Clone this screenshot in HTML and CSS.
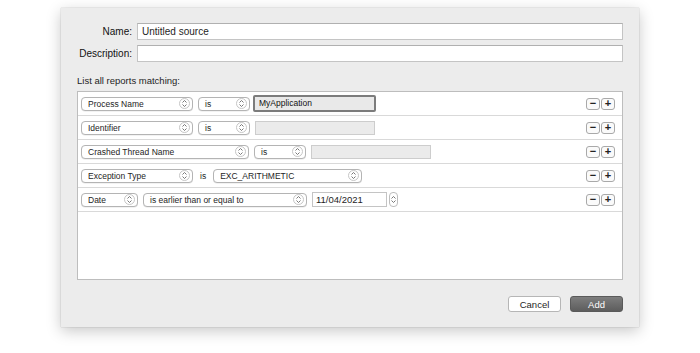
FILE: index.html
```html
<!DOCTYPE html>
<html lang="en">
<head>
    <meta charset="UTF-8">
    <meta name="viewport" content="width=device-width, initial-scale=1.0">
    <title>New Source</title>
    <link rel="stylesheet" href="styles.css">
</head>
<body>
    <div class="sheet">
        <div class="fields">
            <label class="field-label" for="name">Name:</label>
            <div class="text-input" id="name">Untitled source</div>
            <label class="field-label" for="desc">Description:</label>
            <div class="text-input" id="desc"></div>
        </div>

        <p class="caption">List all reports matching:</p>

        <div class="rules">
            <div class="rule">
                <div class="popup w-112">Process Name <span class="arrows"></span></div>
                <div class="popup w-52">is <span class="arrows"></span></div>
                <div class="value focused">MyApplication</div>
                <div class="add-remove"><span class="sq">&minus;</span><span class="sq">+</span></div>
            </div>
            <div class="rule">
                <div class="popup w-112">Identifier <span class="arrows"></span></div>
                <div class="popup w-52">is <span class="arrows"></span></div>
                <div class="value"></div>
                <div class="add-remove"><span class="sq">&minus;</span><span class="sq">+</span></div>
            </div>
            <div class="rule">
                <div class="popup w-168">Crashed Thread Name <span class="arrows"></span></div>
                <div class="popup w-52">is <span class="arrows"></span></div>
                <div class="value"></div>
                <div class="add-remove"><span class="sq">&minus;</span><span class="sq">+</span></div>
            </div>
            <div class="rule">
                <div class="popup w-112">Exception Type <span class="arrows"></span></div>
                <span class="plain">is</span>
                <div class="popup w-149">EXC_ARITHMETIC <span class="arrows"></span></div>
                <div class="add-remove"><span class="sq">&minus;</span><span class="sq">+</span></div>
            </div>
            <div class="rule">
                <div class="popup w-57">Date <span class="arrows"></span></div>
                <div class="popup w-164">is earlier than or equal to <span class="arrows"></span></div>
                <div class="date">11/04/2021</div>
                <div class="stepper"></div>
                <div class="add-remove"><span class="sq">&minus;</span><span class="sq">+</span></div>
            </div>
        </div>

        <div class="actions">
            <button class="btn">Cancel</button>
            <button class="btn primary">Add</button>
        </div>
    </div>

    <script>
        // same up/down chevron icon for every popup and the stepper
        const chevrons = '<svg width="7" height="9" viewBox="0 0 7 9"><path d="M1.5 3.5 L3.5 1.5 L5.5 3.5 M1.5 5.5 L3.5 7.5 L5.5 5.5" fill="none" stroke="#6a6a6a" stroke-width="0.9"/></svg>';
        document.querySelectorAll('.arrows, .stepper').forEach(function (el) {
            el.innerHTML = chevrons;
        });
    </script>
</body>
</html>
```

FILE: styles.css
```css
body {
    margin: 0;
    width: 700px;
    height: 353px;
    background-color: #fff;
    font-family: 'Liberation Sans', Arial, sans-serif;
    color: #1e1e1e;
    overflow: hidden;
}
.sheet {
    margin: 8px 0 0 61px;
    width: 578px;
    height: 319px;
    box-sizing: border-box;
    padding: 15px 16px 0 16px;
    background-color: #ececec;
    box-shadow: 0 4px 14px rgba(0,0,0,0.22), 0 0 1px rgba(0,0,0,0.3);
}
.fields {
    display: grid;
    grid-template-columns: 55px 1fr;
    column-gap: 5px;
    row-gap: 5px;
}
.field-label {
    font-size: 10px;
    text-align: right;
    line-height: 17px;
    white-space: nowrap;
    color: #111;
}
.text-input {
    height: 17px;
    box-sizing: border-box;
    background-color: #fff;
    border: 1px solid #c4c4c4;
    border-top-color: #b0b0b0;
    font-size: 10px;
    line-height: 15px;
    padding-left: 4px;
}
.caption {
    margin: 12px 0 0 0;
    font-size: 9.5px;
    line-height: 13px;
}
.rules {
    margin-top: 4px;
    height: 189px;
    box-sizing: border-box;
    background-color: #fff;
    border: 1px solid #bdbdbd;
}
.rule {
    display: flex;
    align-items: center;
    gap: 5px;
    height: 24px;
    box-sizing: border-box;
    padding: 0 7px 0 3px;
    border-bottom: 1px solid #d9d9d9;
    font-size: 8.5px;
}
.popup {
    display: flex;
    align-items: center;
    justify-content: space-between;
    height: 14px;
    box-sizing: border-box;
    padding: 0 2px 0 6px;
    background-color: #fff;
    border: 1px solid #b4b4b4;
    border-radius: 4px;
    box-shadow: 0 0.5px 0 rgba(0,0,0,0.1);
}
.arrows {
    display: flex;
    align-items: center;
    justify-content: center;
    width: 9px;
    height: 9px;
    border: 0.5px solid #c6c6c6;
    border-radius: 50%;
}
.w-52 { width: 52px; }
.w-57 { width: 57px; }
.w-112 { width: 112px; }
.w-149 { width: 149px; }
.w-164 { width: 164px; }
.w-168 { width: 168px; }
.value {
    width: 120px;
    height: 14px;
    box-sizing: border-box;
    background-color: #ebebeb;
    border: 1px solid #cdcdcd;
    padding-left: 4px;
    line-height: 12px;
}
.value.focused {
    width: 123px;
    height: 17px;
    margin-left: -2px;
    border: 2px solid #7c7c7c;
    border-radius: 2px;
    line-height: 13px;
    background-color: #e9e9e9;
    color: #111;
}
.plain {
    padding: 0 2px;
}
.date {
    width: 75px;
    height: 15px;
    box-sizing: border-box;
    background-color: #fff;
    border: 1px solid #c4c4c4;
    padding-left: 3px;
    line-height: 13px;
    font-size: 9.5px;
}
.stepper {
    display: flex;
    align-items: center;
    justify-content: center;
    width: 9px;
    height: 15px;
    margin-left: -3px;
    box-sizing: border-box;
    border: 1px solid #bdbdbd;
    border-radius: 4px;
    background-color: #fff;
}
.add-remove {
    display: flex;
    margin-left: auto;
}
.sq {
    width: 14px;
    height: 12px;
    box-sizing: border-box;
    border: 1px solid #a9a9a9;
    border-radius: 3px;
    background-color: #fafafa;
    font-size: 11px;
    font-weight: bold;
    line-height: 9px;
    text-align: center;
    color: #222;
}
.sq + .sq {
    margin-left: 1px;
}
.actions {
    display: flex;
    justify-content: flex-end;
    gap: 9px;
    margin-top: 16px;
}
.btn {
    width: 53px;
    height: 16px;
    padding: 0;
    font-family: 'Liberation Sans', Arial, sans-serif;
    font-size: 9.5px;
    background-color: #fff;
    border: 1px solid #b6b6b6;
    border-radius: 3px;
    color: #1e1e1e;
}
.btn.primary {
    background: linear-gradient(#7d7d7d, #5d5d5d);
    border-color: #5a5a5a;
    color: #fff;
}
```
